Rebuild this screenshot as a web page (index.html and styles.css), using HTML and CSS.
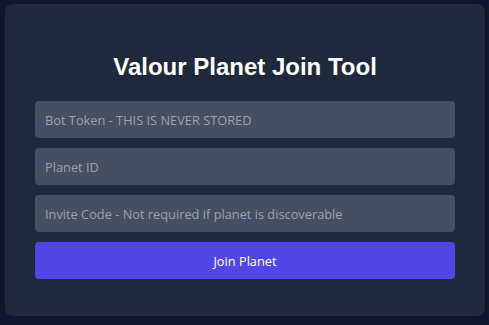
FILE: index.html
```html
<!DOCTYPE html>
<html>
<head>
<meta charset="utf-8">
<link rel="stylesheet" href="styles.css">
</head>
<body>
<div class="card">
  <h1 class="title">Valour Planet Join Tool</h1>
  <form class="form">
    <input class="field" type="text" placeholder="Bot Token - THIS IS NEVER STORED">
    <input class="field" type="text" placeholder="Planet ID">
    <input class="field" type="text" placeholder="Invite Code - Not required if planet is discoverable">
    <button class="btn" type="button">Join Planet</button>
  </form>
</div>
</body>
</html>
```

FILE: styles.css
```css
html, body {
  margin: 0;
  padding: 0;
  background: #0f172a;
}
body {
  padding: 4px 4px 9px 5px;
  width: 480px;
  height: 312px;
}
.card {
  box-sizing: border-box;
  width: 480px;
  height: 312px;
  background: #1e293b;
  border-radius: 8px;
  padding: 48px 30px 30px;
}
.title {
  margin: 0 0 20px;
  text-align: center;
  font-family: "Liberation Sans", Arial, sans-serif;
  font-weight: bold;
  font-size: 24px;
  line-height: 29px;
  color: #ffffff;
}
.form {
  display: flex;
  flex-direction: column;
  gap: 10px;
}
.field {
  box-sizing: border-box;
  height: 37px;
  width: 100%;
  border: none;
  border-radius: 4px;
  background: #444f61;
  padding: 0 10px;
  font-family: "Open Sans", sans-serif;
  font-size: 12.8px;
  color: #e5e7eb;
  outline: none;
}
.field::placeholder {
  color: #9ca3af;
}
.btn {
  height: 37px;
  border: none;
  border-radius: 4px;
  background: #4f46e5;
  color: #ffffff;
  font-family: "Open Sans", sans-serif;
  font-size: 12.8px;
}
```
